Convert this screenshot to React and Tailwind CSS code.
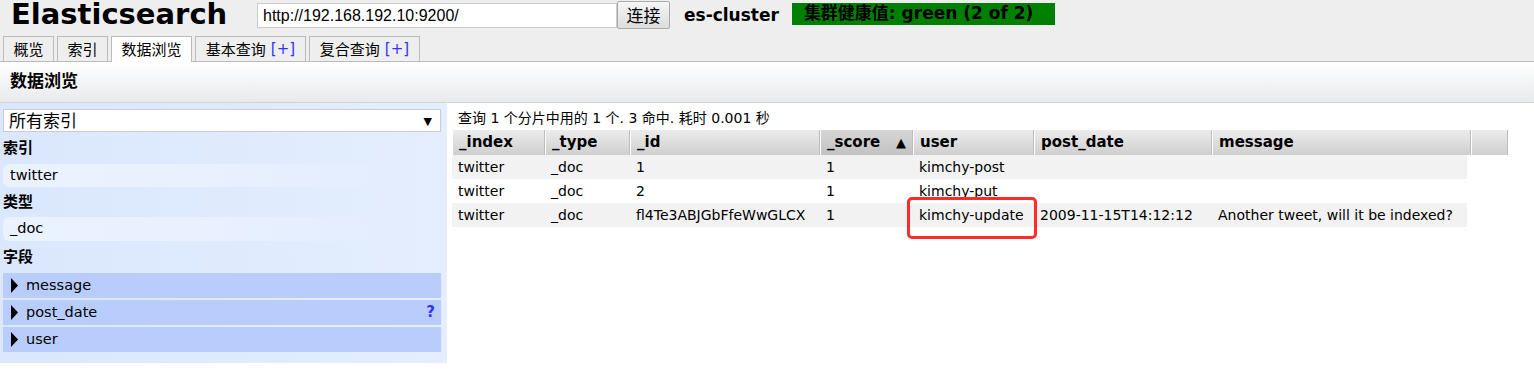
import React from "react";

const cols = [
  { key: "_index", w: "w-[93px]" },
  { key: "_type", w: "w-[85px]" },
  { key: "_id", w: "w-[190px]" },
  { key: "_score", w: "w-[93px]", sorted: true },
  { key: "user", w: "w-[121px]" },
  { key: "post_date", w: "w-[178px]" },
  { key: "message", w: "w-[255px]" },
];

const rows = [
  ["twitter", "_doc", "1", "1", "kimchy-post", "", ""],
  ["twitter", "_doc", "2", "1", "kimchy-put", "", ""],
  ["twitter", "_doc", "fl4Te3ABJGbFfeWwGLCX", "1", "kimchy-update", "2009-11-15T14:12:12", "Another tweet, will it be indexed?"],
];

const tabs = [
  { label: "概览", w: "w-[51px]" },
  { label: "索引", w: "w-[51px]" },
  { label: "数据浏览", w: "w-[81px]", active: true },
  { label: "基本查询", w: "w-[111px]", plus: true },
  { label: "复合查询", w: "w-[111px]", plus: true },
];

function Label({ children, h }) {
  return (
    <div className={`${h} flex items-center text-[15px] font-bold`}>{children}</div>
  );
}

function Field({ name, help }) {
  return (
    <div className="h-[25px] bg-[#b8cdfc] flex items-center pl-[7px] pr-[6px]">
      <svg width="9" height="15" viewBox="0 0 9 15" className="mr-[7px]">
        <path d="M1 0 L8 7.5 L1 15 Z" fill="#000" />
      </svg>
      <span className="text-[14.5px]">{name}</span>
      {help && <span className="ml-auto text-[15px] font-bold text-[#3333ff]">?</span>}
    </div>
  );
}

export default function App() {
  return (
    <div className="relative w-full h-[383px] bg-white text-black font-['DejaVu_Sans','Noto_Sans_CJK_SC',sans-serif]">
      {/* header */}
      <div className="bg-[#eeeeee] border-b border-[#bbbbbb]">
        <div className="h-[36px] flex items-start">
          <h1 className="ml-[11px] mt-[-2px] text-[29px] leading-[33px] font-bold w-[246px]">Elasticsearch</h1>
          <div className="mt-[3px] w-[360px] h-[25px] bg-white border border-[#cccccc] flex items-center pl-[5px] text-[16px] font-['Liberation_Sans','Noto_Sans_CJK_SC',sans-serif]">
            http://192.168.192.10:9200/
          </div>
          <button className="mt-[1px] w-[53px] h-[28px] border border-[#aaaaaa] rounded-[2px] bg-gradient-to-b from-[#f6f6f6] to-[#dddddd] text-[17px] font-['Noto_Sans_CJK_SC',sans-serif]">
            连接
          </button>
          <span className="ml-[14px] mt-[4px] text-[17px] leading-[22px] font-bold">es-cluster</span>
          <div className="ml-[13px] mt-[3px] w-[263px] h-[22px] bg-[#008000] flex items-center pl-[12px] text-[17px] font-bold whitespace-nowrap">
            集群健康值: green (2 of 2)
          </div>
        </div>
        <div className="flex items-end gap-[3px] pl-[3px] h-[25px]">
          {tabs.map((t) => (
            <div
              key={t.label}
              className={`${t.w} border border-b-0 border-[#bbbbbb] flex items-center justify-center text-[15px] whitespace-nowrap ${
                t.active ? "h-[26px] -mb-px bg-white" : "h-[25px] bg-[#eeeeee]"
              }`}
            >
              <span className="font-['Noto_Sans_CJK_SC',sans-serif]">{t.label}</span>
              {t.plus && <span className="ml-[5px] text-[#3333ff]">[+]</span>}
            </div>
          ))}
        </div>
      </div>

      {/* section title */}
      <div className="h-[41px] border-b border-[#d4d4d4] bg-gradient-to-b from-[#ffffff] to-[#e8eaec] flex items-center pl-[10px] text-[17px] font-bold">
        数据浏览
      </div>

      <div className="flex">
        {/* sidebar */}
        <div className="w-[447px] h-[260px] bg-gradient-to-r from-[#dae7fc] to-[#e4eefe] pl-[3px] pr-[6px] pt-[6px]">
          <div className="h-[23px] bg-white border border-[#cccccc] flex items-end pl-[5px] pr-[8px] overflow-hidden">
            <span className="text-[17px] leading-[20px]">所有索引</span>
            <span className="ml-auto text-[11px] leading-[18px]">▼</span>
          </div>
          <Label h="h-[32px]">索引</Label>
          <div className="w-[388px] h-[23px] rounded-[6px] bg-gradient-to-r from-[#eaf2ff] via-[#e9f1ff] to-[#e3edfe] flex items-center pl-[7px] text-[14.5px]">
            twitter
          </div>
          <Label h="h-[30px]">类型</Label>
          <div className="w-[388px] h-[24px] rounded-[6px] bg-gradient-to-r from-[#eaf2ff] via-[#e9f1ff] to-[#e3edfe] flex items-center pl-[7px] text-[14.5px]">
            _doc
          </div>
          <Label h="h-[32px]">字段</Label>
          <div className="flex flex-col gap-[2px]">
            <Field name="message" />
            <Field name="post_date" help />
            <Field name="user" />
          </div>
        </div>

        {/* results */}
        <div className="flex-1 pl-[5px] pt-[4px]">
          <div className="h-[22px] flex items-center pl-[6px] text-[14px]">
            查询 1 个分片中用的 1 个. 3 命中. 耗时 0.001 秒
          </div>
          <div className="flex h-[25px] mt-[1px]">
            {cols.map((c, i) => (
              <div
                key={c.key}
                className={`${i === 6 ? "w-[259px]" : c.w} h-full flex items-center pl-[6px] border-l border-white border-r border-r-[#bdbdbd] text-[15px] font-bold ${
                  c.sorted
                    ? "bg-gradient-to-b from-[#d6d6d6] to-[#c2c2c2]"
                    : "bg-gradient-to-b from-[#ececec] to-[#cfcfcf]"
                }`}
              >
                {c.key}
                {c.sorted && <span className="ml-auto mr-[6px] text-[13px]">▲</span>}
              </div>
            ))}
            <div className="w-[37px] h-full border-l border-white border-r border-r-[#bdbdbd] bg-gradient-to-b from-[#ececec] to-[#cfcfcf]" />
          </div>
          {rows.map((r, ri) => (
            <div key={ri} className={`flex h-[24px] w-[1015px] ${ri % 2 === 0 ? "bg-[#f2f2f2]" : "bg-white"}`}>
              {r.map((v, ci) => (
                <div key={ci} className={`${cols[ci].w} flex items-center pl-[6px] text-[14px] whitespace-nowrap`}>
                  {v}
                </div>
              ))}
            </div>
          ))}
        </div>
      </div>

      {/* annotation */}
      <div className="absolute left-[907px] top-[197px] w-[130px] h-[42px] border-[3px] border-[#ff2a2a] rounded-[5px]" />
    </div>
  );
}
